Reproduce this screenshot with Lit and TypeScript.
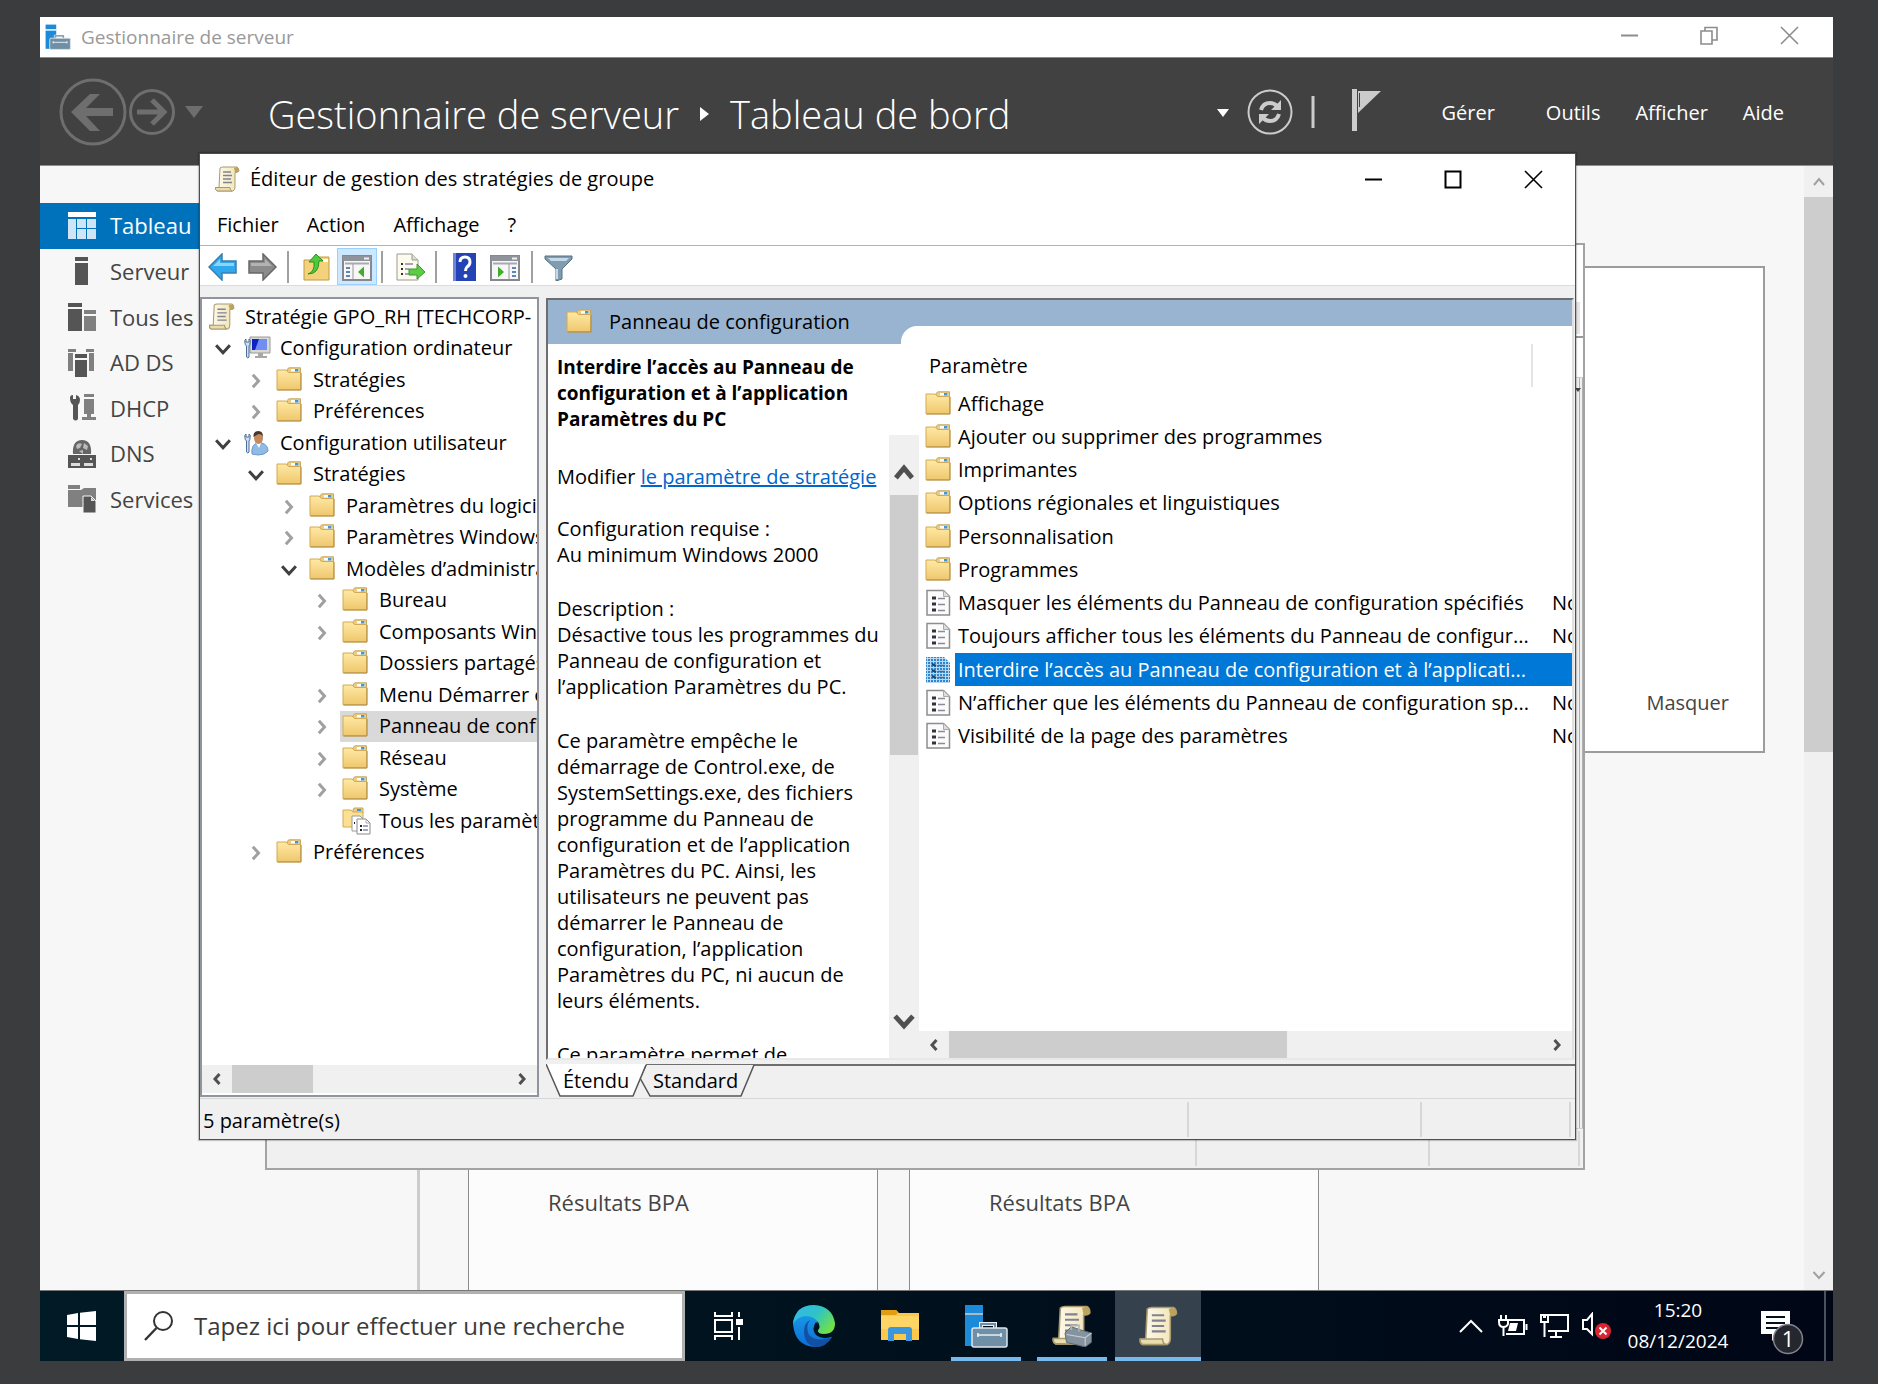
import { LitElement, html, svg, css, nothing } from "lit";
import { customElement } from "lit/decorators.js";
import { classMap } from "lit/directives/class-map.js";

/* ---------- shared icons ---------- */

const folder = html`<svg class="ico" width="26" height="26" viewBox="0 0 26 26" aria-hidden="true">
  <defs><linearGradient id="fg" x1="0" y1="0" x2="0" y2="1"><stop offset="0" stop-color="#ffe9a4"/><stop offset="1" stop-color="#efc76e"/></linearGradient></defs>
  <path d="M11 6V2.500L13 0.800H24.500V6Z" fill="#e9cd86" stroke="#c9a55a"/>
  <rect x="15" y="2" width="8" height="2.500" fill="#fff"/><rect x="19" y="2" width="3.500" height="2.500" fill="#3f97dd"/>
  <path d="M1 3H10L12.500 5.500H24.800V22.800H1Z" fill="url(#fg)" stroke="#d2aa55"/>
  <path d="M1.500 23H25V6" fill="none" stroke="#b08a3c"/>
</svg>`;

const folderDocs = html`<svg class="ico" width="30" height="28" viewBox="0 0 30 28" aria-hidden="true">
  <path d="M11 6V3L12 1H21V6Z" fill="#e9cd86" stroke="#c9a55a"/><rect x="15" y="2" width="4" height="2" fill="#3f97dd"/>
  <path d="M1 3H9L11 5H21V20H1Z" fill="#fbdf92" stroke="#d2aa55"/>
  <path d="M10 9H18L21 12V24H10Z" fill="#fff" stroke="#9a9a9a"/>
  <path d="M15 12H24L28 16V27H15Z" fill="#fff" stroke="#8a8a8a"/><path d="M24 12V16H28" fill="none" stroke="#aaa"/>
  <path d="M18 19H20M18 23H20M12 16H13" stroke="#223" stroke-width="2"/><path d="M21 19H26M21 23H26" stroke="#88a" stroke-width="1.500"/>
</svg>`;

const scrollArt = svg`
  <defs><linearGradient id="sg" x1="0" y1="0" x2="1" y2="0"><stop offset="0" stop-color="#fffdf2"/><stop offset="1" stop-color="#efe2b4"/></linearGradient></defs>
  <path d="M6 2Q7 1 9 1H23Q25 2 25 5Q24 6.500 21 6.500V21Q21 24 19 25H3Q1 24 1.500 21.500H5Z" fill="url(#sg)" stroke="#a99a6d"/>
  <path d="M20 2Q24 0 25 4Q25 6.500 21 6.500Z" fill="#bba35c"/>
  <path d="M1.500 21.500H16Q16 24.500 18 25H3Q1 24 1.500 21.500Z" fill="#e9dcae" stroke="#a99a6d"/>
  <path d="M9 6H17M9 9.500H18M9 13H17M9 16.500H18" stroke="#83828c" stroke-width="1.400"/>`;
const scrollIcon = (w: number) =>
  html`<svg class="ico" width=${w} height=${w} viewBox="0 0 26 26" aria-hidden="true">${scrollArt}</svg>`;

const doc = html`<svg class="ico" width="26" height="28" viewBox="0 0 26 28" aria-hidden="true">
  <path d="M2 1.500H18.500L24.500 7.500V26H2Z" fill="#fbfbfb" stroke="#8d8d8d" stroke-width="1.500"/>
  <path d="M18.500 1.500V7.500H24.500Z" fill="#ddd" stroke="#aaa"/>
  <path d="M7 9H11M7 15H11M7 21H11" stroke="#33333c" stroke-width="3"/>
  <path d="M13 9.500H20M13 15.500H20M13 21.500H20" stroke="#8d8a9c" stroke-width="1.600"/>
</svg>`;

const docSelected = html`<svg class="ico" width="26" height="28" viewBox="0 0 26 28" aria-hidden="true">
  <defs><pattern id="dots" width="3" height="3" patternUnits="userSpaceOnUse"><rect width="3" height="3" fill="#b9d9f3"/><rect width="2" height="2" fill="#2f86cc"/></pattern></defs>
  <path d="M1 1H19L25 7V27H1Z" fill="url(#dots)"/>
  <path d="M7 8L11 10M7 14L11 16M7 20L11 22" stroke="#17486f" stroke-width="2.500"/>
  <path d="M13 9.500H20M13 15.500H20M13 21.500H20" stroke="#3a6fa3" stroke-width="1.600"/>
</svg>`;

const wrench = svg`<path d="M2 8Q1 5 3 4V7H6V4Q8 5 7 8Q7 10 6 11V22Q5 24 3.500 22V11Q2 10 2 8Z" fill="#cfe0f2" stroke="#4c6f99"/>`;
const computer = html`<svg class="ico" width="28" height="26" viewBox="0 0 28 26" aria-hidden="true">
  <path d="M7 2H27V18H7Z" fill="#d9d9d4" stroke="#9a9a96"/><path d="M9 4H24V15H9Z" fill="#0f20c4"/><path d="M16 4H24V15H12Z" fill="#6f8df2"/>
  <path d="M15 18H20V21H24V23H12V21H15Z" fill="#a9a9a4"/>${wrench}</svg>`;
const user = html`<svg class="ico" width="28" height="26" viewBox="0 0 28 26" aria-hidden="true">
  <path d="M9 24Q8 15 14 13H19Q25 15 25 21Q22 25 15 25Z" fill="#8fbbe6" stroke="#6b98c8"/><path d="M13 13L16 18L18 13Z" fill="#fff"/>
  <ellipse cx="15.500" cy="8" rx="4.500" ry="6" fill="#c48a5e"/><path d="M10.500 7Q10 1 15.500 1Q20 1 20 7Q19 4 15.500 4Q12 6 10.500 7Z" fill="#43362d"/>${wrench}</svg>`;

const chevron = (dir: "up" | "down" | "left" | "right", stroke = 3) => {
  const d = { up: "M3 11L8 5L13 11", down: "M2.500 5L8 11L13.500 5", left: "M10.500 3L6 8L10.500 13", right: "M5.500 3L10 8L5.500 13" }[dir];
  return html`<svg class="chev" width="16" height="16" viewBox="0 0 16 16" aria-hidden="true"><path d=${d} fill="none" stroke="currentColor" stroke-width=${stroke}/></svg>`;
};

const serverArt = svg`<path d="M1 1H19V9H1Z" fill="#1b8ad8"/><path d="M1 11H19V42H1Z" fill="#1b8ad8"/>
  <path d="M1 10H19" stroke="#e6f2fb" stroke-width="1.500"/>
  <path d="M6 23H44V44H6Z" fill="#fff" fill-opacity="0"/><path d="M17 24V20H31V24" fill="none" stroke="#e8eef2" stroke-width="4"/>
  <path d="M17 24V20H31V24" fill="none" stroke="#6e8fa5" stroke-width="2"/>
  <rect x="8" y="24" width="35" height="19" rx="2" fill="#6e8fa5" stroke="#dde6ec" stroke-width="1.500"/>
  <path d="M13 31H38M14 29V33M37 29V33" stroke="#e8eef2" stroke-width="1.600"/>`;
const serverLogo = (w: number) => html`<svg class="ico" width=${w} height=${w} viewBox="0 0 44 44" aria-hidden="true">${serverArt}</svg>`;

const winMin = svg`<path d="M1 9.500H18" stroke="currentColor" stroke-width="2"/>`;
const winClose = svg`<path d="M1 1L18 18M18 1L1 18" stroke="currentColor" stroke-width="1.600"/>`;
const winMax = svg`<path d="M1.500 1.500H16.500V17.500H1.500Z" fill="none" stroke="currentColor" stroke-width="2"/>`;
const winRestore = svg`<path d="M1 5H12V18H1ZM5 5V1.500H17V14H12" fill="none" stroke="currentColor" stroke-width="1.600"/>`;
const winBtn = (label: string, art: unknown) =>
  html`<button class="win" aria-label=${label}><svg width="19" height="19" viewBox="0 0 19 19" aria-hidden="true">${art}</svg></button>`;

const shared = css`
  * { box-sizing: border-box; }
  button { font: inherit; color: inherit; background: none; border: 0; padding: 0; margin: 0; display: flex; align-items: center; justify-content: center; }
  ul { list-style: none; margin: 0; padding: 0; }
  p, h1, h2 { margin: 0; font-size: inherit; font-weight: inherit; }
  svg { display: block; flex: none; }
  .ctl { display: flex; height: 100%; }
  .win { width: 80px; height: 100%; }
`;

/* ---------- server manager, behind everything ---------- */

const navItems: { label: string; icon: unknown; on?: boolean }[] = [
  { label: "Tableau", on: true, icon: svg`<path d="M0 0H28V5H0Z" fill="#fff"/><path d="M0 7H8V27H0ZM9 7H18V16H9ZM19 7H28V16H19ZM9 17H18V27H9ZM19 17H28V27H19Z" fill="#cfe5f5"/>` },
  { label: "Serveur", icon: svg`<path d="M7 0H20V4H7ZM7 6H20V28H7Z" fill="#555"/>` },
  { label: "Tous les", icon: svg`<path d="M0 0H14V4H0ZM0 6H14V28H0Z" fill="#555"/><path d="M16 7H28V11H16ZM16 13H28V28H16Z" fill="#808080"/>` },
  { label: "AD DS", icon: svg`<path d="M0 0H8V3H0ZM0 4H5V22H0ZM18 0H26V3H18ZM21 4H26V22H21Z" fill="#808080"/><path d="M7 5H19V9H7ZM7 11H19V28H7Z" fill="#555"/>` },
  { label: "DHCP", icon: svg`<path d="M2 4Q2 1 5 1V5H8V1Q12 2 12 6Q12 9 10 11V25Q8 28 5 25V11Q2 9 2 4Z" fill="#555"/><path d="M16 0H26V3H16ZM16 5H26V20H16ZM19 20H23V23H28V26H14V23H19Z" fill="#808080"/>` },
  { label: "DNS", icon: svg`<path d="M5 14Q4 0 14 0Q24 0 23 14Z" fill="#666"/><path d="M8 6Q10 2 14 4L12 8L9 9ZM16 3L20 6L19 10L15 8ZM11 11L15 10V14Z" fill="#bbb"/><path d="M0 15H28V28H0Z" fill="#555"/><path d="M3 23H12V26H3ZM16 23H25V26H16Z" fill="#ddd"/><path d="M10 19H12M22 19H24" stroke="#ddd" stroke-width="2"/>` },
  { label: "Services", icon: svg`<path d="M0 0H12V4H0ZM0 5H13L16 3H28V22H0Z" fill="#808080"/><path d="M15 11H23L28 16V28H15Z" fill="#555" stroke="#f7f7f7"/><path d="M23 12V16H27Z" fill="#ddd"/>` },
];

@customElement("server-manager")
export class ServerManager extends LitElement {
  static styles = [shared, css`
    :host { display: flex; flex-direction: column; color: #444; font-size: 22px; }
    .title { display: flex; align-items: center; height: 41px; background: #fff; border-bottom: 1px solid #8a8a8a; padding-left: 5px; gap: 10px; color: #999; font-size: 19px; }
    .title h2 { flex: 1; }
    .ctl { color: #8c8c8c; height: 36px; align-self: flex-start; margin-right: 4px; }
    .banner { display: flex; align-items: center; height: 108px; background: #414141; border-bottom: 1px solid #8f8f8f; color: #fff; padding: 0 49px 0 19px; }
    .banner h1 { display: flex; align-items: center; font-size: 38px; font-weight: 300; margin-left: 65px; padding-top: 6px; gap: 21px; flex: 1; white-space: nowrap; }
    .round { color: #6e6e6e; }
    .tools { display: flex; align-items: center; gap: 18px; }
    .menu { display: flex; font-size: 20px; margin-left: 58px; gap: 35px; padding-top: 3px; }
    .menu .first { margin-right: 16px; }
    .body { flex: 1; display: flex; min-height: 0; background: #f7f7f7; }
    nav { width: 380px; border-right: 3px solid #ccc; padding-top: 37px; }
    nav ul { display: flex; flex-direction: column; height: 319px; }
    nav li { flex: 1; display: flex; }
    nav a { flex: 1; display: flex; align-items: center; gap: 14px; padding-left: 28px; color: #444; text-decoration: none; }
    .on { background: #0072bc; color: #fff; }
    .dash { flex: 1; display: flex; flex-direction: column; padding: 100px 39px 0 48px; }
    .welcome { height: 487px; background: #fff; border: 2px solid #9c9c9c; display: flex; justify-content: flex-end; align-items: flex-end; padding: 0 34px 35px 0; font-size: 20px; }
    .cards { flex: 1; display: flex; gap: 31px; margin-top: 160px; }
    .card { width: 410px; border: 1px solid #8c8c8c; border-bottom: 0; background: #fcfcfc; display: flex; align-items: flex-end; padding: 0 0 73px 79px; }
    .scroll { width: 29px; background: #f0f0f0; color: #a0a0a0; display: flex; flex-direction: column; align-items: stretch; }
    .scroll button { height: 31px; }
    .thumb { height: 555px; background: #cdcdcd; }
    .scroll .down { margin-top: auto; }
  `];
  render() {
    return html`
      <header class="title">${serverLogo(26)}<h2>Gestionnaire de serveur</h2>
        <div class="ctl">${winBtn("Réduire", winMin)}${winBtn("Restaurer", winRestore)}${winBtn("Fermer", winClose)}</div>
      </header>
      <div class="banner">
        <button class="round" aria-label="Précédent"><svg width="68" height="68" viewBox="0 0 68 68"><circle cx="34" cy="34" r="32" fill="none" stroke="currentColor" stroke-width="3"/><path d="M12 34L31 16H41L27 30H54V38H27L41 53H31Z" fill="currentColor"/></svg></button>
        <button class="round" aria-label="Suivant"><svg width="48" height="48" viewBox="0 0 48 48"><circle cx="25" cy="24" r="21.500" fill="none" stroke="currentColor" stroke-width="3"/><path d="M10 24H37M25 12L37 24L25 36" fill="none" stroke="currentColor" stroke-width="5"/></svg></button>
        <button class="round" aria-label="Historique"><svg width="28" height="14" viewBox="0 0 28 14"><path d="M10 1H28L19 13Z" fill="currentColor"/></svg></button>
        <h1><span>Gestionnaire de serveur</span><svg width="9" height="16" viewBox="0 0 9 16"><path d="M0 1L9 8L0 15Z" fill="#fff"/></svg><span>Tableau de bord</span></h1>
        <div class="tools">
          <button aria-label="Plus"><svg width="12" height="10" viewBox="0 0 12 10"><path d="M0 2H12L6 10Z" fill="#fff"/></svg></button>
          <button aria-label="Actualiser"><svg width="46" height="46" viewBox="0 0 46 46"><circle cx="23" cy="23" r="21.500" fill="none" stroke="#ccc" stroke-width="2"/><g fill="none" stroke="#ccc" stroke-width="4"><path d="M14 21Q16 14 23 14Q27 14 30 17"/><path d="M32 25Q30 32 23 32Q19 32 16 29"/></g><path d="M34 11V21H24ZM12 35V25H22Z" fill="#ccc"/></svg></button>
          <svg width="4" height="32" viewBox="0 0 4 32"><path d="M2 0V32" stroke="#ccc" stroke-width="3"/></svg>
          <button aria-label="Notifications"><svg width="50" height="48" viewBox="0 0 50 48"><path d="M19 1H24V43H19Z" fill="#ccc"/><path d="M25 3H48L25 25Z" fill="#ccc"/><path d="M26.500 5V19" stroke="#414141"/></svg></button>
        </div>
        <div class="menu"><button class="first">Gérer</button><button>Outils</button><button>Afficher</button><button>Aide</button></div>
      </div>
      <div class="body">
        <nav aria-label="Rôles"><ul>${navItems.map((n) => html`<li><a href="#" class=${classMap({ on: !!n.on })}><svg width="28" height="28" viewBox="0 0 28 28" aria-hidden="true">${n.icon}</svg>${n.label}</a></li>`)}</ul></nav>
        <div class="dash">
          <section class="welcome"><button>Masquer</button></section>
          <div class="cards"><section class="card">Résultats BPA</section><section class="card">Résultats BPA</section></div>
        </div>
        <div class="scroll"><button aria-label="Haut">${chevron("up", 2)}</button><div class="thumb"></div><button class="down" aria-label="Bas">${chevron("down", 2)}</button></div>
      </div>`;
  }
}

/* ---------- group policy editor ---------- */

type Node = { level: number; label: string; open?: boolean; icon?: unknown; selected?: boolean };
const tree: Node[] = [
  { level: 0, label: "Stratégie GPO_RH [TECHCORP-", icon: scrollIcon(27) },
  { level: 1, label: "Configuration ordinateur", open: true, icon: computer },
  { level: 2, label: "Stratégies", open: false },
  { level: 2, label: "Préférences", open: false },
  { level: 1, label: "Configuration utilisateur", open: true, icon: user },
  { level: 2, label: "Stratégies", open: true },
  { level: 3, label: "Paramètres du logiciel", open: false },
  { level: 3, label: "Paramètres Windows", open: false },
  { level: 3, label: "Modèles d’administration", open: true },
  { level: 4, label: "Bureau", open: false },
  { level: 4, label: "Composants Windows", open: false },
  { level: 4, label: "Dossiers partagés" },
  { level: 4, label: "Menu Démarrer et", open: false },
  { level: 4, label: "Panneau de configuration", open: false, selected: true },
  { level: 4, label: "Réseau", open: false },
  { level: 4, label: "Système", open: false },
  { level: 4, label: "Tous les paramètres", icon: folderDocs },
  { level: 2, label: "Préférences", open: false },
];

type Row = { label: string; setting?: boolean; selected?: boolean };
const rows: Row[] = [
  { label: "Affichage" },
  { label: "Ajouter ou supprimer des programmes" },
  { label: "Imprimantes" },
  { label: "Options régionales et linguistiques" },
  { label: "Personnalisation" },
  { label: "Programmes" },
  { label: "Masquer les éléments du Panneau de configuration spécifiés", setting: true },
  { label: "Toujours afficher tous les éléments du Panneau de configur...", setting: true },
  { label: "Interdire l’accès au Panneau de configuration et à l’applicati...", setting: true, selected: true },
  { label: "N’afficher que les éléments du Panneau de configuration sp...", setting: true },
  { label: "Visibilité de la page des paramètres", setting: true },
];

const paragraphs: string[][] = [
  ["Configuration requise :", "Au minimum Windows 2000"],
  ["Description :", "Désactive tous les programmes du", "Panneau de configuration et", "l’application Paramètres du PC."],
  ["Ce paramètre empêche le", "démarrage de Control.exe, de", "SystemSettings.exe, des fichiers", "programme du Panneau de", "configuration et de l’application", "Paramètres du PC. Ainsi, les", "utilisateurs ne peuvent pas", "démarrer le Panneau de", "configuration, l’application", "Paramètres du PC, ni aucun de", "leurs éléments."],
  ["Ce paramètre permet de"],
];

const paneArt = (flip: boolean) => svg`
  <path d="M1 3H29V27H1Z" fill="#f7f7f7" stroke="#85898f" stroke-width="2"/><path d="M1 3H29V8H1Z" fill="#8f949b"/><path d="M3 10.500H27" stroke="#a6abb2" stroke-width="2"/><path d="M22 5.500H27" stroke="#eee" stroke-width="2"/>
  ${flip
    ? svg`<path d="M19 11V26" stroke="#999"/><path d="M22 15H26M22 19H26M22 23H26" stroke="#5b86b8" stroke-width="2"/><path d="M8 13.500L14 19L8 24.500Z" fill="#3fae2b"/>`
    : svg`<path d="M11 11V26" stroke="#999"/><path d="M4 15H8M4 19H8M4 23H8" stroke="#5b86b8" stroke-width="2"/><path d="M22 13.500L16 19L22 24.500Z" fill="#3fae2b"/>`}`;
const toolArt = {
  back: svg`<path d="M1 14L14 1V8H28V20H14V27Z" fill="#2fa8ec" stroke="#3a7fae" stroke-width="1.500"/><path d="M5 13L12 6V10H26V13Z" fill="#8fd3f8"/>`,
  fwd: svg`<path d="M28 14L15 1V8H1V20H15V27Z" fill="#8b8b8b" stroke="#686868" stroke-width="1.500"/><path d="M24 13L17 6V10H3V13Z" fill="#b3b3b3"/>`,
  up: svg`<path d="M2 7H15L17 4H27V27H2Z" fill="#f4d27c" stroke="#c09a45"/><path d="M21 6H26V9H21Z" fill="#fff"/><path d="M6 21Q13 19 12 9H7L14 1L21 8H17Q17 21 6 21Z" fill="#4fcb3a" stroke="#2f8f22"/>`,
  exp: svg`<path d="M1 1H16L22 7V27H1Z" fill="#fdfbee" stroke="#9a9a8c"/><path d="M16 1V7H22" fill="#ddd" stroke="#9a9a8c"/><path d="M5 11H7M5 16H7M5 21H7" stroke="#333" stroke-width="2"/><path d="M9 11H17M9 16H13M9 21H13" stroke="#88a" stroke-width="1.500"/><path d="M13 16H21V11L29 19L21 26V22H13Z" fill="#5ccb45" stroke="#3a9a2b"/>`,
  help: svg`<path d="M3 0H26V28H3Z" fill="#2443b4"/><path d="M3 0H6V28H3Z" fill="#6f86d8"/><path d="M10 9Q10 4 15 4Q20 4 20 9Q20 12 17 14Q15.500 15.500 15.500 18" fill="none" stroke="#fff" stroke-width="3"/><circle cx="15.500" cy="23" r="2" fill="#fff"/>`,
  filter: svg`<path d="M1 3H28V6L18 16V26L12 28V16L1 6Z" fill="#7f9cb1" stroke="#566f82"/><path d="M4 5H25L22 8H7Z" fill="#c8d8e4"/><path d="M13 16V26" stroke="#c8d8e4" stroke-width="2"/>`,
};
const tool = (label: string, art: unknown, cls = "") =>
  html`<button class="tool ${cls}" aria-label=${label}><svg width="30" height="28" viewBox="0 0 30 28" aria-hidden="true">${art}</svg></button>`;

@customElement("policy-editor")
export class PolicyEditor extends LitElement {
  static styles = [shared, css`
    :host { display: flex; flex-direction: column; background: #fff; border: 1px solid #4f4f4f; color: #000; font-size: 20px; box-shadow: 0 0 1px 1px #0003; white-space: nowrap; }
    .title { display: flex; align-items: center; height: 50px; padding: 0 2px 0 14px; gap: 10px; }
    .title h2 { flex: 1; }
    .menu { display: flex; align-items: center; gap: 28px; height: 42px; padding: 0 17px; border-bottom: 1px solid #b4b4b4; }
    .tools { display: flex; align-items: flex-end; height: 40px; padding-left: 3px; border-bottom: 1px solid #dcdcdc; }
    .tool { width: 40px; height: 37px; }
    .tool.on { background: #cce8ff; border: 1px solid #99d1ff; }
    .sep { width: 2px; height: 32px; background: #a0a0a0; margin: 0 6px 2px; }
    .sep.tight { margin: 0 8px 2px 4px; }
    .work { flex: 1; min-height: 0; display: flex; gap: 7px; background: #f0f0f0; padding: 11px 1px 1px 0; }
    .tree { width: 339px; display: flex; flex-direction: column; background: #fff; border: 2px solid #8f949e; }
    .tree ul { display: flex; flex-direction: column; height: 569px; padding-top: 2px; overflow: hidden; }
    .tree li { flex: 1; display: flex; align-items: center; min-height: 0; padding-left: calc(var(--level) * 33px - 22px); }
    .tree li.root { padding-left: 4px; }
    li .chev { margin: 2px 8px 0 0; width: 20px; height: 20px; color: #a0a0a0; }
    li.open .chev { color: #404040; }
    .gap { width: 28px; flex: none; }
    .node { flex: 1; display: flex; align-items: center; height: 100%; padding-left: 2px; min-width: 0; overflow: hidden; }
    .node .slot { width: 37px; flex: none; }
    .selected .node { background: #d9d9d9; }
    .hbar { display: flex; background: #f0f0f0; color: #505050; }
    .hbar button { width: 30px; }
    .hbar .thumb { background: #cdcdcd; }
    .hbar .end { margin-left: auto; }
    .tree .hbar { margin-top: auto; height: 28px; margin-bottom: 2px; }
    .tree .hbar .thumb { width: 81px; }
    .main { flex: 1; min-width: 0; display: flex; flex-direction: column; padding-top: 1px; }
    .view { flex: 1; min-height: 0; display: flex; flex-direction: column; background: #fff; border: 2px solid #6e6e6e; border-right-color: #e0e0e0; border-bottom-color: #e8e8e8; }
    .head { display: flex; align-items: center; height: 44px; background: #99b4d1; padding-left: 18px; gap: 17px; }
    .head h2 { width: 292px; }
    .notch { align-self: flex-end; flex: 1; height: 18px; margin-left: -17px; background: #fff; border-top-left-radius: 16px; }
    .split { flex: 1; min-height: 0; display: flex; }
    .desc { width: 341px; overflow: hidden; padding: 10px 0 0 9px; line-height: 26px; }
    .desc h2 { font-weight: 700; font-size: 19px; }
    .desc p { margin-top: 28px; }
    .desc .edit { margin-top: 32px; margin-bottom: 26px; }
    .desc .edit + p { margin-top: 0; }
    .line { display: block; }
    a { color: #0066cc; }
    .vbar { width: 30px; margin-top: 91px; background: #f0f0f0; color: #505050; display: flex; flex-direction: column; padding: 0 1px; }
    .vbar button { height: 60px; padding-top: 16px; }
    .vbar .chev { width: 26px; height: 26px; }
    .vbar .thumb { height: 260px; background: #cdcdcd; }
    .vbar .end { margin-top: auto; padding-top: 0; height: 74px; }
    .list { flex: 1; min-width: 0; display: flex; flex-direction: column; overflow: hidden; }
    .clip { flex: 1; overflow: hidden; }
    table { border-collapse: collapse; table-layout: fixed; width: 100%; height: 409px; line-height: 26px; }
    .c-icon { width: 36px; } .c-state { width: 40px; }
    th { height: 43px; font-weight: 400; text-align: left; padding: 0 0 0 10px; }
    th:first-child { border-right: 2px solid #e5e5e5; }
    tbody tr { height: 33px; }
    td { padding: 0; overflow: hidden; }
    td:first-child { padding-left: 6px; }
    .name { padding-left: 3px; }
    .state { padding-left: 20px; }
    tr.sel .name, tr.sel .state { background: #0078d7; color: #fff; }
    .list .hbar { height: 27px; }
    .list .hbar .thumb { width: 338px; }
    .tabs { position: relative; display: flex; height: 37px; margin-right: -1px; }
    .tabs::before { content: ""; position: absolute; inset: 4px 0 auto 0; border-top: 2px solid #6e6e6e; }
    .tabs svg { position: absolute; left: 0; top: 4px; }
    .tabs button { position: relative; padding: 5px 0 0 17px; width: 107px; justify-content: flex-start; }
    .tabs button + button { padding-left: 0; }
    .status { display: flex; height: 41px; background: #f0f0f0; border-top: 1px solid #d7d7d7; padding: 3px 4px 2px 3px; }
    .status span { display: flex; align-items: center; border-right: 2px solid #d7d7d7; }
    .status .s1 { flex: 1; padding-top: 2px; } .status .s2 { width: 233px; } .status .s3 { width: 149px; }
  `];
  private node(n: Node) {
    const icon = n.icon ?? folder;
    const twist = n.level === 0 ? nothing : n.open === undefined ? html`<span class="gap"></span>` : chevron(n.open ? "down" : "right", 2.4);
    return html`<li role="treeitem" class=${classMap({ root: n.level === 0, open: !!n.open, selected: !!n.selected })} style="--level:${n.level}">
      ${twist}<span class="node"><span class="slot">${icon}</span>${n.label}</span></li>`;
  }
  render() {
    return html`
      <header class="title">${scrollIcon(26)}<h2>Éditeur de gestion des stratégies de groupe</h2><div class="ctl">${winBtn("Réduire", winMin)}${winBtn("Agrandir", winMax)}${winBtn("Fermer", winClose)}</div></header>
      <div class="menu"><button>Fichier</button><button>Action</button><button>Affichage</button><button>?</button></div>
      <div class="tools">
        ${tool("Précédent", toolArt.back)}${tool("Suivant", toolArt.fwd)}<span class="sep tight"></span>
        ${tool("Dossier parent", toolArt.up)}${tool("Arborescence", paneArt(false), "on")}<span class="sep tight"></span>
        ${tool("Exporter", toolArt.exp)}<span class="sep tight"></span>
        ${tool("Aide", toolArt.help)}${tool("Volet Actions", paneArt(true))}<span class="sep"></span>${tool("Filtrer", toolArt.filter)}
      </div>
      <div class="work">
        <div class="tree">
          <ul role="tree">${tree.map((n) => this.node(n))}</ul>
          <div class="hbar"><button aria-label="Gauche">${chevron("left")}</button><div class="thumb"></div><button class="end" aria-label="Droite">${chevron("right")}</button></div>
        </div>
        <div class="main">
          <div class="view">
            <div class="head">${folder}<h2>Panneau de configuration</h2><span class="notch"></span></div>
            <div class="split">
              <div class="desc">
                <h2><span class="line">Interdire l’accès au Panneau de</span><span class="line">configuration et à l’application</span><span class="line">Paramètres du PC</span></h2>
                <p class="edit">Modifier <a href="#">le paramètre de stratégie</a></p>
                ${paragraphs.map((p) => html`<p>${p.map((l) => html`<span class="line">${l}</span>`)}</p>`)}
              </div>
              <div class="vbar"><button aria-label="Haut">${chevron("up")}</button><div class="thumb"></div><button class="end" aria-label="Bas">${chevron("down")}</button></div>
              <div class="list">
                <div class="clip">
                  <table>
                    <colgroup><col class="c-icon"/><col/><col class="c-state"/></colgroup>
                    <thead><tr><th colspan="2">Paramètre</th><th></th></tr></thead>
                    <tbody>${rows.map((r) => html`<tr class=${classMap({ sel: !!r.selected })}><td>${r.selected ? docSelected : r.setting ? doc : folder}</td><td class="name">${r.label}</td><td class="state">${r.setting && !r.selected ? "Non configuré" : nothing}</td></tr>`)}</tbody>
                  </table>
                </div>
                <div class="hbar"><button aria-label="Gauche">${chevron("left")}</button><div class="thumb"></div><button class="end" aria-label="Droite">${chevron("right")}</button></div>
              </div>
            </div>
          </div>
          <div class="tabs">
            <svg width="212" height="33" viewBox="0 0 212 33" aria-hidden="true"><path d="M100 1L94 14L104 32H195L208 1" fill="#f0f0f0" stroke="#555" stroke-width="1.500"/><path d="M0 0L14 32H87L100 0Z" fill="#fff"/><path d="M0 0L14 32H87L100 1" fill="none" stroke="#555" stroke-width="1.500"/></svg>
            <button>Étendu</button><button>Standard</button>
          </div>
        </div>
      </div>
      <footer class="status"><span class="s1">5 paramètre(s)</span><span class="s2"></span><span class="s3"></span></footer>`;
  }
}

/* ---------- task bar ---------- */

@customElement("task-bar")
export class TaskBar extends LitElement {
  static styles = [shared, css`
    :host { display: flex; height: 71px; border-top: 1px solid #777; background: linear-gradient(90deg, #001a26, #00101c 55%, #000616); color: #fff; }
    .start { width: 84px; padding-right: 1px; }
    .search { width: 561px; display: flex; align-items: center; background: #fff; border: 3px solid #b0b0b0; padding-left: 17px; gap: 20px; }
    input { flex: 1; min-width: 0; border: 0; outline: 0; background: none; font: inherit; font-size: 24px; color: #333; padding: 0; }
    input::placeholder { color: #3a3a3a; opacity: 1; }
    .app { width: 86px; position: relative; }
    .run::after { content: ""; position: absolute; left: 8px; right: 8px; bottom: 0; height: 4px; background: #76b9ed; }
    .active { background: #35424e; }
    .active::after { left: 0; right: 0; }
    .tray { margin-left: auto; display: flex; align-items: center; }
    .tray .t { width: 42px; height: 100%; }
    .clock { width: 120px; height: 100%; display: flex; flex-direction: column; align-items: center; justify-content: center; font-size: 19px; line-height: 31px; }
    .notif { width: 86px; height: 100%; padding: 14px 0 0 4px; }
    .peek { width: 9px; height: 100%; border-left: 2px solid #4a5260; }
  `];
  render() {
    return html`
      <button class="start" aria-label="Démarrer"><svg width="29" height="30" viewBox="0 0 29 30"><path d="M0 4L11 2V14H0ZM13 1.700L29 0V14H13ZM0 16H11V28L0 26ZM13 16H29V30L13 28.300Z" fill="#fff"/></svg></button>
      <label class="search"><svg width="30" height="32" viewBox="0 0 30 32" aria-hidden="true"><circle cx="19" cy="11" r="9" fill="none" stroke="#333" stroke-width="2"/><path d="M12.500 18L1 30" stroke="#333" stroke-width="2.400"/></svg>
        <input type="text" aria-label="Rechercher" placeholder="Tapez ici pour effectuer une recherche"/></label>
      <button class="app" aria-label="Affichage des tâches"><svg width="30" height="28" viewBox="0 0 30 28"><g fill="none" stroke="#fff" stroke-width="2"><path d="M2 0V4H19V0M2 28V24H19V28M2 8H19V20H2ZM26 0V5M26 15V28"/></g><path d="M23 7H30V13H23Z" fill="#fff"/></svg></button>
      <button class="app" aria-label="Edge"><svg width="44" height="44" viewBox="0 0 44 44">
        <defs><linearGradient id="e1" x1="0" y1="0" x2="1" y2="0.600"><stop offset="0" stop-color="#35b6ee"/><stop offset="0.550" stop-color="#2fc3c6"/><stop offset="1" stop-color="#6fe04a"/></linearGradient><linearGradient id="e2" x1="0" y1="0" x2="0" y2="1"><stop offset="0" stop-color="#1a9ae6"/><stop offset="1" stop-color="#0a6fd6"/></linearGradient></defs>
        <path d="M1 20Q1 9 14 9L26 14L24 30L40 33Q34 43 23 43Q3 42 1 20Z" fill="url(#e2)"/>
        <path d="M18 16Q13 23 17 31Q25 39 40 33Q34 43 23 43Q12 40 12 28Q12 19 18 16Z" fill="#1350a4"/>
        <path d="M1 20Q3 1 22 1Q40 2 43 19Q43 30 32 30Q25 30 26 26Q29 23 26 18Q22 12 13 12Q5 13 1 20Z" fill="url(#e1)"/>
        <path d="M24 18Q28 22 26 26Q25 30 32 31Q38 31 41 28L39 33Q30 36 24 31Q19 25 24 18Z" fill="#00131f"/></svg></button>
      <button class="app" aria-label="Explorateur de fichiers"><svg width="38" height="34" viewBox="0 0 38 34"><path d="M0 1H15L18 4H38V31H0Z" fill="#fcc84b"/><path d="M0 1H15L17 3L15 6H0Z" fill="#e09d12"/><path d="M0 7H38V20H0Z" fill="#ffd566"/><path d="M7 32V21Q7 18 10 18H28Q31 18 31 21V32H25V25H13V32Z" fill="#3a96dd"/></svg></button>
      <button class="app run" aria-label="Gestionnaire de serveur">${serverLogo(44)}</button>
      <button class="app run" aria-label="Gestion des stratégies de groupe"><svg width="42" height="42" viewBox="0 0 27 27">${scrollArt}<path d="M9 18L13 14L19 16L26 18V24L22 27L10 24Z" fill="#84939d" stroke="#59666f" stroke-width="0.600"/><path d="M13 16V13H18V17" fill="none" stroke="#a9b5bd"/><path d="M10 19L22 21V26M22 21L26 18" fill="none" stroke="#c6d0d6" stroke-width="0.700"/></svg></button>
      <button class="app run active" aria-label="Éditeur de gestion des stratégies de groupe">${scrollIcon(40)}</button>
      <div class="tray">
        <button class="t" aria-label="Icônes cachées"><svg width="24" height="14" viewBox="0 0 24 14"><path d="M1 13L12 2L23 13" fill="none" stroke="#fff" stroke-width="2"/></svg></button>
        <button class="t" aria-label="Batterie"><svg width="30" height="22" viewBox="0 0 30 22"><g fill="none" stroke="#fff" stroke-width="2"><path d="M10 5H26V19H8M28.500 9V15M3 0V5M8 0V5M1 5H10V9Q9 12 5.500 12Q1 12 1 7ZM5.500 12V21"/></g><path d="M12 8H20L18 16H10Z" fill="#fff"/></svg></button>
        <button class="t" aria-label="Réseau"><svg width="30" height="26" viewBox="0 0 30 26"><g fill="none" stroke="#fff" stroke-width="2"><path d="M9 2H28V18H8M1 2H8V9H1ZM4.500 9V24M16 18V24M10 24H22"/></g><path d="M3 4H6" stroke="#fff" stroke-width="2"/></svg></button>
        <button class="t" aria-label="Volume"><svg width="30" height="28" viewBox="0 0 30 28"><path d="M1 8H5L10 2V22L5 17H1Z" fill="none" stroke="#fff" stroke-width="2"/><circle cx="21" cy="19" r="8" fill="#d9252f"/><path d="M17.500 15.500L24.500 22.500M24.500 15.500L17.500 22.500" stroke="#fff" stroke-width="2"/></svg></button>
        <button class="clock"><span>15:20</span><span>08/12/2024</span></button>
        <button class="notif" aria-label="Notifications"><svg width="44" height="44" viewBox="0 0 44 44"><path d="M0 0H29V23H18L11 30V23H0Z" fill="#fff"/><path d="M5 6H24M5 12H24M5 17H18" stroke="#00101c" stroke-width="2"/><circle cx="27" cy="28" r="14.500" fill="#24272d" stroke="#80848a" stroke-width="1.500"/><text x="27" y="36" text-anchor="middle" font-size="22" fill="#fff">1</text></svg></button>
        <span class="peek"></span>
      </div>`;
  }
}

/* ---------- desktop ---------- */

@customElement("app-root")
export class AppRoot extends LitElement {
  static styles = [shared, css`
    :host { display: flex; min-height: 100vh; background: #3b3c3e; padding: 17px 45px 23px 40px; box-sizing: border-box; font-family: "Open Sans", "Noto Sans", sans-serif; line-height: 1.3; }
    .desktop { position: relative; flex: 1; min-width: 0; display: flex; flex-direction: column; overflow: hidden; }
    server-manager { flex: 1; min-height: 0; }
    .back { position: absolute; inset: 226px 248px 191px 225px; background: #fff; border: 2px solid #a3a3a3; display: flex; flex-direction: column; }
    .back .strip { height: 57px; }
    .back .menu { height: 34px; background: #e6e6e6; border-right: 3px solid #fff; border-bottom: 2px solid #fff; }
    .back .tools { height: 42px; border-top: 2px solid #999; border-bottom: 1px solid #ccc; }
    .back .fill { flex: 1; background: #f0f0f0; border-right: 4px double #b0b0b0; display: flex; justify-content: flex-end; padding-top: 10px; }
    .back .fill svg { margin-right: -2px; }
    .back .foot { height: 40px; background: #f0f0f0; border-top: 1px solid #d0d0d0; display: flex; justify-content: flex-end; padding: 2px 3px 2px 0; }
    .back .foot span { border-right: 2px solid #d7d7d7; }
    .f1 { width: 60px; } .f2 { width: 233px; } .f3 { width: 150px; }
    policy-editor { position: absolute; inset: 136px 257px 221px 159px; }
  `];
  render() {
    return html`<main class="desktop">
      <server-manager></server-manager>
      <task-bar></task-bar>
      <div class="back"><div class="strip"></div><div class="menu"></div><div class="tools"></div>
        <div class="fill"><svg width="6" height="4" viewBox="0 0 6 4"><path d="M0 0H6L3 4Z" fill="#444"/></svg></div>
        <div class="foot"><span class="f1"></span><span class="f2"></span><span class="f3"></span></div></div>
      <policy-editor></policy-editor>
    </main>`;
  }
}
